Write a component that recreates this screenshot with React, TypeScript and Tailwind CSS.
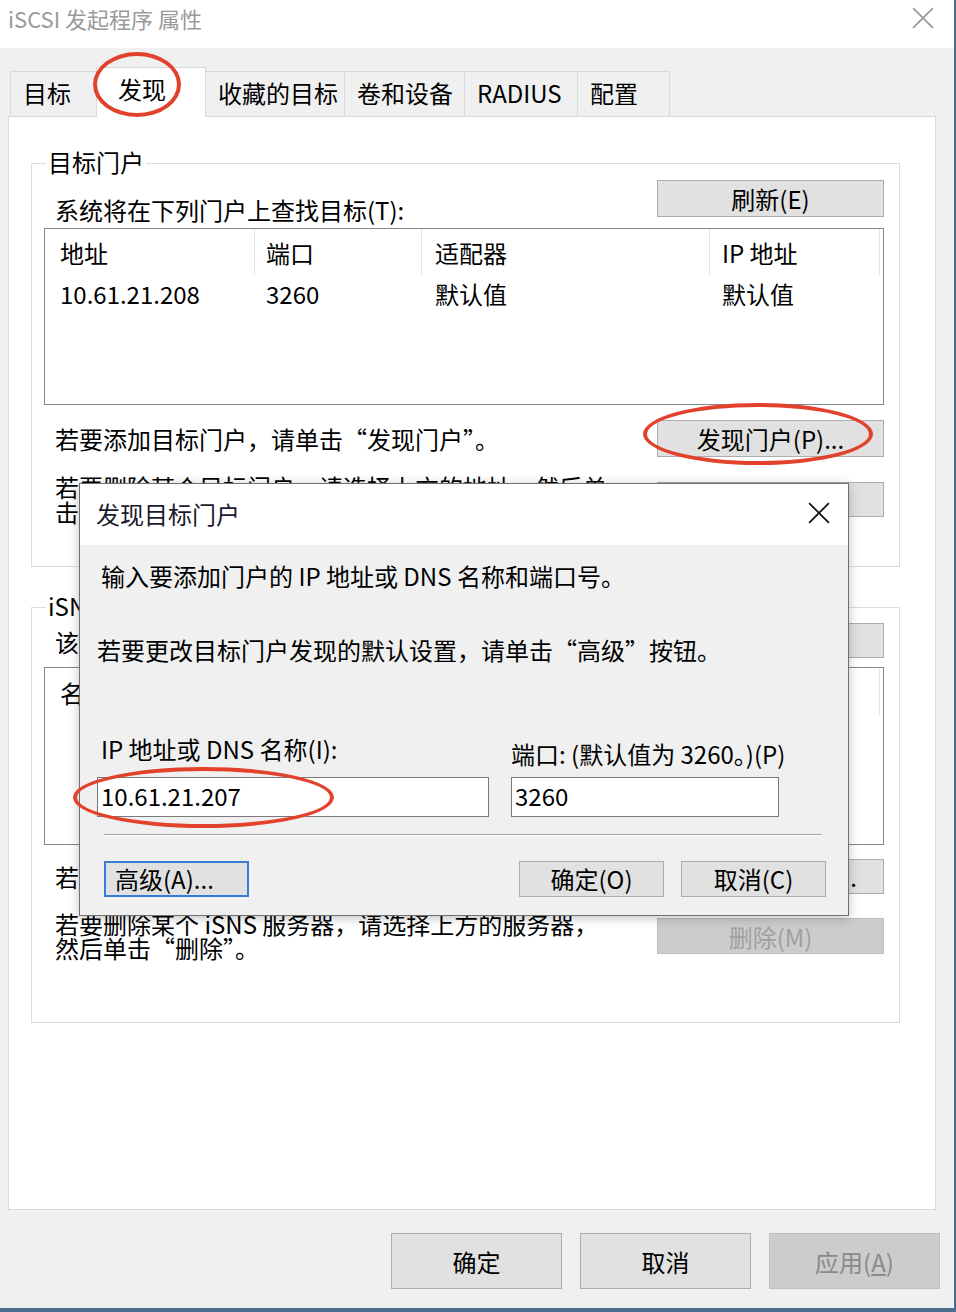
import clsx from "clsx";
import type { ReactNode } from "react";

const tabs = [
  { label: "目标", w: "w-[87px]" },
  { label: "发现", w: "w-[110px]", active: true },
  { label: "收藏的目标", w: "w-[140px]" },
  { label: "卷和设备", w: "w-[121px]" },
  { label: "RADIUS", w: "w-[114px]" },
  { label: "配置", w: "w-[93px]" },
];

function Btn({
  children,
  className,
  disabled,
}: {
  children: ReactNode;
  className?: string;
  disabled?: boolean;
}) {
  return (
    <div
      className={clsx(
        "flex shrink-0 items-center justify-center whitespace-nowrap border text-[24px] leading-[25px]",
        disabled
          ? "border-[#bfbfbf] bg-[#cccccc] text-[#a0a0a0]"
          : "border-[#adadad] bg-[#e1e1e1] text-black",
        className
      )}
    >
      {children}
    </div>
  );
}

function XIcon({ size, color }: { size: number; color: string }) {
  return (
    <svg width={size} height={size} viewBox="0 0 20 20" aria-hidden>
      <path d="M1 1 L19 19 M19 1 L1 19" stroke={color} strokeWidth="1.6" fill="none" />
    </svg>
  );
}

function GroupBox({
  label,
  className,
  children,
}: {
  label: string;
  className?: string;
  children: ReactNode;
}) {
  return (
    <div className={clsx("relative ml-[22px] w-[869px] border border-[#dcdcdc] pl-[12px] pr-[15px]", className)}>
      <span className="absolute left-[14px] top-[-15px] bg-white px-[2px] text-[24px] leading-[25px]">
        {label}
      </span>
      {children}
    </div>
  );
}

function App() {
  return (
    <div className="relative h-[1312px] w-[956px] overflow-hidden border-b-[4px] border-r-[2px] border-[#4d6d8f] bg-[#f0f0f0] font-['Noto_Sans_CJK_SC','Noto_Sans',sans-serif] text-black">
      {/* title bar */}
      <div className="flex h-[48px] items-start justify-between bg-white pl-[8px] pr-[20px] pt-[5px]">
        <span className="text-[22px] leading-[26px] text-[#9a9a9a]">iSCSI 发起程序 属性</span>
        <div className="pt-[2px]">
          <XIcon size={22} color="#9a9a9a" />
        </div>
      </div>

      {/* tabs */}
      <div className="flex items-end pl-[10px] pt-[19px]">
        {tabs.map((t) => (
          <div
            key={t.label}
            className={clsx(
              "-ml-px flex items-center border border-b-0 border-[#d9d9d9] pl-[12px] text-[24px] leading-[25px] first:ml-0",
              t.w,
              t.active ? "relative z-10 -mb-px h-[50px] bg-white pb-[8px] pl-[21px]" : "h-[45px] bg-[#f0f0f0] pb-[3px]"
            )}
          >
            {t.label}
          </div>
        ))}
      </div>

      {/* tab panel */}
      <div className="ml-[8px] h-[1094px] w-[928px] border border-[#d9d9d9] bg-white">
        <GroupBox label="目标门户" className="mt-[46px] h-[404px]">
          <div className="flex items-start justify-between pt-[16px]">
            <span className="-mb-[6px] ml-[11px] mt-[17px] text-[24px] leading-[25px]">
              系统将在下列门户上查找目标(T):
            </span>
            <Btn className="h-[37px] w-[227px]">刷新(E)</Btn>
          </div>

          <div className="mt-[11px] h-[177px] border border-[#828790] bg-white text-[24px] leading-[25px]">
            <div className="flex h-[46px]">
              <div className="flex w-[210px] items-center border-r border-[#e5e5e5] pl-[15px]">地址</div>
              <div className="flex w-[167px] items-center border-r border-[#e5e5e5] pl-[11px]">端口</div>
              <div className="flex w-[288px] items-center border-r border-[#e5e5e5] pl-[13px]">适配器</div>
              <div className="flex w-[170px] items-center border-r border-[#e5e5e5] pl-[12px]">IP 地址</div>
            </div>
            <div className="flex h-[36px] items-center">
              <div className="w-[210px] pl-[15px]">10.61.21.208</div>
              <div className="w-[167px] pl-[11px]">3260</div>
              <div className="w-[288px] pl-[13px]">默认值</div>
              <div className="w-[170px] pl-[12px]">默认值</div>
            </div>
          </div>

          <div className="mt-[15px] flex items-center justify-between">
            <span className="ml-[11px] text-[24px] leading-[25px]">若要添加目标门户，请单击“发现门户”。</span>
            <Btn className="h-[37px] w-[227px]">发现门户(P)...</Btn>
          </div>

          <div className="mt-[17px] flex items-center justify-between">
            <span className="ml-[11px] w-[560px] text-[24px] leading-[25px]">
              若要删除某个目标门户，请选择上方的地址，然后单击“删除”。
            </span>
            <Btn className="h-[35px] w-[227px]">删除(R)</Btn>
          </div>
        </GroupBox>

        <GroupBox label="iSNS 服务器" className="mt-[40px] h-[416px]">
          <div className="flex items-start justify-between pt-[15px]">
            <span className="ml-[11px] mt-[6px] text-[24px] leading-[25px]">
              该系统已在下列 iSNS 服务器上注册(S):
            </span>
            <Btn className="h-[35px] w-[227px]">刷新(F)</Btn>
          </div>

          <div className="mt-[9px] h-[178px] border border-[#828790] bg-white text-[24px] leading-[25px]">
            <div className="flex h-[48px]">
              <div className="flex w-[835px] items-center border-r border-[#e5e5e5] pl-[15px]">名称</div>
            </div>
          </div>

          <div className="mt-[14px] flex items-center justify-between">
            <span className="ml-[11px] text-[24px] leading-[25px]">若要添加 iSNS 服务器，请单击“添加服务器”。</span>
            <Btn className="h-[35px] w-[227px]">添加服务器(D)...</Btn>
          </div>

          <div className="mt-[18px] flex items-center justify-between">
            <span className="ml-[11px] w-[560px] text-[24px] leading-[24px]">
              若要删除某个 iSNS 服务器，请选择上方的服务器，然后单击“删除”。
            </span>
            <Btn disabled className="h-[36px] w-[227px]">
              删除(M)
            </Btn>
          </div>
        </GroupBox>
      </div>

      {/* bottom buttons */}
      <div className="mt-[23px] flex justify-end gap-[18px] pr-[14px]">
        <Btn className="h-[56px] w-[171px]">确定</Btn>
        <Btn className="h-[56px] w-[171px]">取消</Btn>
        <Btn disabled className="h-[56px] w-[171px] !text-[#8a8a8a]">
          应用(<span className="underline">A</span>)
        </Btn>
      </div>

      {/* discover portal dialog */}
      <div className="absolute left-[79px] top-[483px] z-20 flex h-[433px] w-[770px] flex-col border border-[#707070] bg-[#f0f0f0] shadow-[0_2px_10px_rgba(0,0,0,0.25)]">
        <div className="flex h-[61px] items-center justify-between bg-white pb-[3px] pl-[16px] pr-[18px]">
          <span className="text-[24px] leading-[25px] text-[#1a1a2e]">发现目标门户</span>
          <XIcon size={22} color="#111" />
        </div>
        <div className="flex flex-col text-[24px] leading-[25px]">
          <span className="pl-[21px] pt-[18px]">输入要添加门户的 IP 地址或 DNS 名称和端口号。</span>
          <span className="mt-[49px] pl-[17px]">若要更改目标门户发现的默认设置，请单击“高级”按钮。</span>

          <div className="mt-[74px] flex items-start gap-[22px] pl-[17px]">
            <span className="w-[392px] pl-[4px]">IP 地址或 DNS 名称(I):</span>
            <span className="mt-[5px]">端口: (默认值为 3260。)(P)</span>
          </div>

          <div className="mt-[11px] flex gap-[22px] pl-[17px]">
            <div className="flex h-[40px] w-[392px] items-center border border-[#7a7a7a] bg-white pb-[3px] pl-[3px]">
              10.61.21.207
            </div>
            <div className="flex h-[40px] w-[268px] items-center border border-[#7a7a7a] bg-white pb-[3px] pl-[3px]">
              3260
            </div>
          </div>

          <div className="ml-[24px] mt-[17px] w-[718px] border-b border-t border-b-white border-t-[#a0a0a0]" />

          <div className="mt-[25px] flex items-center justify-between pl-[24px] pr-[22px]">
            <Btn className="h-[36px] w-[145px] !justify-start border-[2px] !border-[#3a7bd5] pb-[2px] pl-[9px]">高级(A)...</Btn>
            <div className="flex gap-[17px]">
              <Btn className="h-[36px] w-[145px] pb-[2px]">确定(O)</Btn>
              <Btn className="h-[36px] w-[145px] pb-[2px]">取消(C)</Btn>
            </div>
          </div>
        </div>
      </div>

      {/* red annotation ellipses */}
      <div className="pointer-events-none absolute left-[93px] top-[52px] z-30 h-[65px] w-[88px] rounded-[50%] border-[4px] border-[#e2412b]" />
      <div className="pointer-events-none absolute left-[643px] top-[403px] z-30 h-[62px] w-[230px] rounded-[50%] border-[4px] border-[#e2412b]" />
      <div className="pointer-events-none absolute left-[73px] top-[767px] z-30 h-[61px] w-[261px] rounded-[50%] border-[4px] border-[#e2412b]" />
    </div>
  );
}

export default App;
